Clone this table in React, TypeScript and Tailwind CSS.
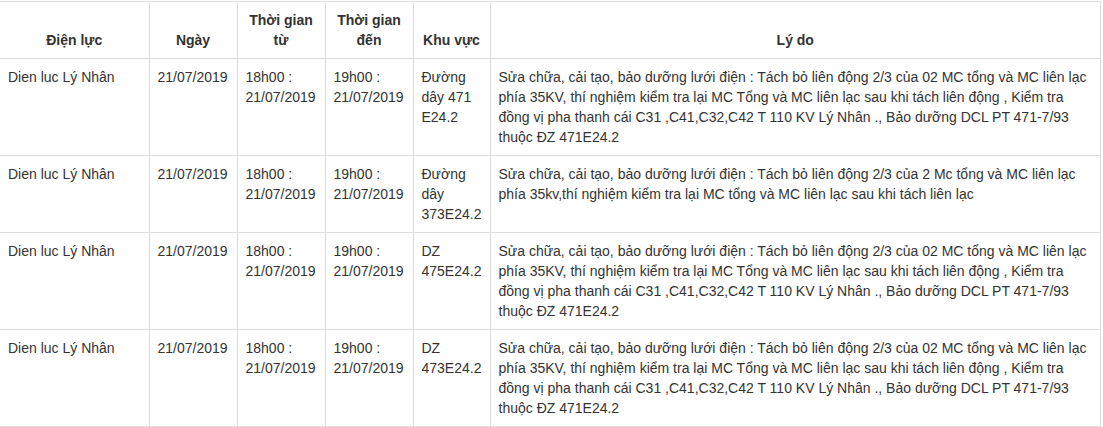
import React from 'react';

interface Outage {
  unit: string;
  date: string;
  from: string;
  to: string;
  area: string;
  reason: string;
}

const LONG_REASON =
  'Sửa chữa, cải tạo, bảo dưỡng lưới điện : Tách bỏ liên động 2/3 của 02 MC tổng và MC liên lạc phía 35KV, thí nghiệm kiểm tra lại MC Tổng và MC liên lạc sau khi tách liên động , Kiểm tra đồng vị pha thanh cái C31 ,C41,C32,C42 T 110 KV Lý Nhân ., Bảo dưỡng DCL PT 471-7/93 thuộc ĐZ 471E24.2';

const rows: Outage[] = [
  {
    unit: 'Dien luc Lý Nhân',
    date: '21/07/2019',
    from: '18h00 : 21/07/2019',
    to: '19h00 : 21/07/2019',
    area: 'Đường dây 471 E24.2',
    reason: LONG_REASON,
  },
  {
    unit: 'Dien luc Lý Nhân',
    date: '21/07/2019',
    from: '18h00 : 21/07/2019',
    to: '19h00 : 21/07/2019',
    area: 'Đường dây 373E24.2',
    reason:
      'Sửa chữa, cải tạo, bảo dưỡng lưới điện : Tách bỏ liên động 2/3 của 2 Mc tổng và MC liên lạc phía 35kv,thí nghiệm kiểm tra lại MC tổng và MC liên lạc sau khi tách liên lạc',
  },
  {
    unit: 'Dien luc Lý Nhân',
    date: '21/07/2019',
    from: '18h00 : 21/07/2019',
    to: '19h00 : 21/07/2019',
    area: 'DZ 475E24.2',
    reason: LONG_REASON,
  },
  {
    unit: 'Dien luc Lý Nhân',
    date: '21/07/2019',
    from: '18h00 : 21/07/2019',
    to: '19h00 : 21/07/2019',
    area: 'DZ 473E24.2',
    reason: LONG_REASON,
  },
];

const th = 'border-l border-[#dddddd] first:border-l-0 border-r last:border-r p-2 align-bottom text-center font-bold';
const td = 'border-l border-[#dddddd] first:border-l-0 p-2 align-top';

export default function App() {
  return (
    <div className="bg-white w-[1103px] h-[427px] pt-px text-[14px] leading-5 text-[#333333] font-['Liberation_Sans',Arial,sans-serif]">
      <table className="table-fixed border-collapse w-[1101px]">
        <colgroup>
          <col className="w-[149px]" />
          <col className="w-[88px]" />
          <col className="w-[88px]" />
          <col className="w-[88px]" />
          <col className="w-[77px]" />
          <col />
        </colgroup>
        <thead>
          <tr className="border-t border-b border-[#dddddd]">
            <th className={th}>Điện lực</th>
            <th className={th}>Ngày</th>
            <th className={th}>Thời gian từ</th>
            <th className={th}>Thời gian đến</th>
            <th className={th}>Khu vực</th>
            <th className={`${th} border-r`}>Lý do</th>
          </tr>
        </thead>
        <tbody>
          {rows.map((r, i) => (
            <tr key={i} className="border-b border-[#dddddd]">
              <td className={td}>{r.unit}</td>
              <td className={td}>{r.date}</td>
              <td className={td}>{r.from}</td>
              <td className={td}>{r.to}</td>
              <td className={td}>{r.area}</td>
              <td className={`${td} border-r`}>{r.reason}</td>
            </tr>
          ))}
        </tbody>
      </table>
    </div>
  );
}
